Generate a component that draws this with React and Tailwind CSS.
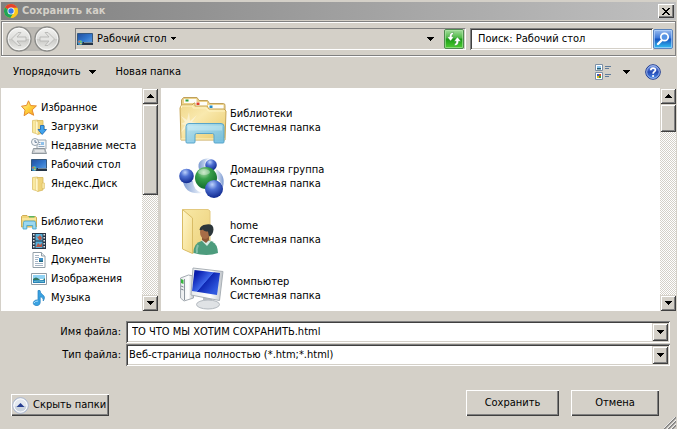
import clsx from 'clsx';

const raised =
    'bg-[#d4d0c8] shadow-[inset_1px_1px_#fff,inset_-1px_-1px_#404040,inset_-2px_-2px_#808080]';
const raisedSoft =
    'bg-[#d4d0c8] shadow-[inset_1px_1px_#d4d0c8,inset_-1px_-1px_#404040,inset_2px_2px_#fff,inset_-2px_-2px_#808080]';
const sunken =
    'shadow-[inset_1px_1px_#808080,inset_-1px_-1px_#fff,inset_2px_2px_#404040,inset_-2px_-2px_#d4d0c8]';

const favorites = [
    { name: 'Загрузки', icon: <DownloadsIcon /> },
    { name: 'Недавние места', icon: <RecentIcon /> },
    { name: 'Рабочий стол', icon: <DesktopIcon /> },
    { name: 'Яндекс.Диск', icon: <SmallFolderIcon /> },
];

const libraries = [
    { name: 'Видео', icon: <VideoIcon /> },
    { name: 'Документы', icon: <DocumentIcon /> },
    { name: 'Изображения', icon: <PictureIcon /> },
    { name: 'Музыка', icon: <MusicIcon /> },
];

const places = [
    { name: 'Библиотеки', icon: <LibrariesLargeIcon /> },
    { name: 'Домашняя группа', icon: <HomegroupIcon /> },
    { name: 'home', icon: <UserFolderIcon /> },
    { name: 'Компьютер', icon: <ComputerIcon /> },
];

export default function App() {
    return (
        <div className="flex h-screen min-h-80 flex-col overflow-hidden bg-[#d4d0c8] px-px pt-0.5 font-['DejaVu_Sans_Condensed','DejaVu_Sans',sans-serif] text-[11px] leading-[14px] text-black">
            <TitleBar />
            <AddressRow />
            <Toolbar />
            <div className="flex min-h-0 flex-1 gap-[3px]">
                <Sidebar />
                <FileList />
            </div>
            <SaveForm />
        </div>
    );
}

function TitleBar() {
    return (
        <header className="flex h-[18px] shrink-0 items-center bg-linear-to-r from-[#808080] to-[#c0c0c0] pr-0.5 pl-[3px]">
            <ChromeIcon />
            <h1 className="ml-1 flex-1 font-bold text-[#d4d0c8]">Сохранить как</h1>
            <button aria-label="Закрыть" className={clsx('grid h-3.5 w-4 place-items-center', raised)}>
                <svg width="8" height="7" viewBox="0 0 8 7" shapeRendering="crispEdges">
                    <path d="M0 0h2v1h1v1h2v-1h1v-1h2v1h-1v1h-1v1h-1v1h1v1h1v1h1v1h-2v-1h-1v-1h-2v1h-1v1h-2v-1h1v-1h1v-1h1v-1h-1v-1h-1v-1h-1z" />
                </svg>
            </button>
        </header>
    );
}

function AddressRow() {
    return (
        <div className="mt-px flex h-[35px] shrink-0 items-center border border-[#808080] pr-0.5 pl-1 shadow-[inset_1px_1px_#fff,0_1px_#fff]">
            <NavButtons />
            <div className="ml-[15px] flex h-[22px] min-w-0 flex-1 items-center border border-t-[#808080] border-r-white border-b-white border-l-[#808080] pr-px pl-px">
                <button className="flex items-center gap-1">
                    <DesktopIcon />
                    Рабочий стол
                    <Caret />
                </button>
                <button aria-label="Предыдущие расположения" className="ml-auto p-2">
                    <Caret wide />
                </button>
                <button aria-label="Обновить" className="ml-0.5">
                    <RefreshIcon />
                </button>
            </div>
            <input
                aria-label="Поиск"
                defaultValue="Поиск: Рабочий стол"
                className={clsx('ml-1 h-[22px] w-[183px] bg-white px-2 outline-none', sunken)}
            />
            <button aria-label="Найти">
                <SearchIcon />
            </button>
        </div>
    );
}

function NavButtons() {
    return (
        <div className="relative flex">
            <svg width="54" height="26" viewBox="0 0 54 26" className="absolute inset-0">
                <defs>
                    <linearGradient id="nav" x2="0" y2="1">
                        <stop stopColor="#f4f4f2" />
                        <stop offset=".48" stopColor="#dededc" />
                        <stop offset=".5" stopColor="#c8c8c5" />
                        <stop offset="1" stopColor="#efefec" />
                    </linearGradient>
                </defs>
                <path d="M13 1h28v24H13q7-3 14-3t14 3V1q-7 3-14 3T13 1" fill="#bbb9b4" />
                <rect x="13" y="3" width="28" height="20" fill="#bdbab4" />
                {[13, 41].map((cx) => (
                    <g key={cx}>
                        <circle cx={cx} cy="13" r="12" fill="url(#nav)" stroke="#8b8b88" strokeWidth="1.4" />
                        <circle cx={cx} cy="13" r="10.8" fill="none" stroke="#fff" strokeOpacity=".7" />
                    </g>
                ))}
                <g fill="#e5e5e3" stroke="#b1b1ae" strokeWidth=".8">
                    <path d="M5.500 13l6.500-6.500h3L11 11h9v4h-9l4 4.500h-3z" />
                    <path d="M48.500 13L42 6.500h-3l4 4.500h-9v4h9l-4 4.500h3z" />
                </g>
            </svg>
            <button aria-label="Назад" className="relative size-[26px] rounded-full" />
            <button aria-label="Вперёд" className="relative ml-0.5 size-[26px] rounded-full" />
        </div>
    );
}

function Toolbar() {
    return (
        <div className="flex h-8 shrink-0 items-center pr-[15px] pl-3">
            <button className="flex items-center gap-2">
                Упорядочить
                <Caret wide />
            </button>
            <button className="ml-5">Новая папка</button>
            <button aria-label="Вид" className="ml-auto flex items-center gap-3">
                <ViewIcon />
                <Caret wide />
            </button>
            <button aria-label="Справка" className="ml-[15px]">
                <HelpIcon />
            </button>
        </div>
    );
}

function Sidebar() {
    return (
        <nav className="flex w-[157px] shrink-0 bg-white">
            <div className="min-w-0 flex-1 overflow-hidden pt-2.5 pl-5">
                <TreeGroup title="Избранное" icon={<StarIcon />} items={favorites} />
                <TreeGroup title="Библиотеки" icon={<LibrarySmallIcon />} items={libraries} />
            </div>
            <ScrollBar thumb="h-[91px]" />
        </nav>
    );
}

function TreeGroup({ title, icon, items }) {
    return (
        <section className="mb-[19px] whitespace-nowrap">
            <h2 className="flex h-[19px] items-center gap-1">
                {icon}
                {title}
            </h2>
            <ul className="pl-2.5">
                {items.map((item) => (
                    <li key={item.name}>
                        <a href="#" className="flex h-[19px] items-center gap-1">
                            {item.icon}
                            {item.name}
                        </a>
                    </li>
                ))}
            </ul>
        </section>
    );
}

function FileList() {
    return (
        <main className="flex min-w-0 flex-1 bg-white">
            <ul className="min-w-0 flex-1 overflow-hidden pt-1 pl-[18px]">
                {places.map((place) => (
                    <li key={place.name} className="flex h-14 items-center gap-[3px]">
                        {place.icon}
                        <div className="pt-0.5">
                            <p>{place.name}</p>
                            <p>Системная папка</p>
                        </div>
                    </li>
                ))}
            </ul>
            <ScrollBar thumb="h-7" />
        </main>
    );
}

function ScrollBar({ thumb }) {
    return (
        <div className="flex w-4 shrink-0 flex-col bg-[repeating-conic-gradient(#fff_0_25%,#d4d0c8_0_50%)] bg-size-[2px_2px]">
            <button aria-label="Прокрутить вверх" className={clsx('grid h-4 place-items-center', raisedSoft)}>
                <Caret wide className="rotate-180" />
            </button>
            <div className={clsx(thumb, raisedSoft)} />
            <button aria-label="Прокрутить вниз" className={clsx('mt-auto grid h-4 place-items-center', raisedSoft)}>
                <Caret wide />
            </button>
        </div>
    );
}

function SaveForm() {
    return (
        <form className="relative shrink-0 pt-2.5 pr-1.5 pb-[13px]" onSubmit={(e) => e.preventDefault()}>
            <div className="grid grid-cols-[120px_1fr] items-center gap-x-[5px] gap-y-px">
                <label htmlFor="name" className="text-right">Имя файла:</label>
                <div className={clsx('flex h-[22px] bg-white p-0.5', sunken)}>
                    <input
                        id="name"
                        defaultValue="ТО ЧТО МЫ ХОТИМ СОХРАНИТЬ.html"
                        className="min-w-0 flex-1 px-1 outline-none"
                    />
                    <button type="button" aria-label="Показать имена" className={clsx('grid w-4 place-items-center', raisedSoft)}>
                        <Caret wide />
                    </button>
                </div>
                <label htmlFor="type" className="text-right">Тип файла:</label>
                <div className={clsx('relative flex h-[22px] bg-white p-0.5', sunken)}>
                    <select id="type" className="min-w-0 flex-1 appearance-none px-px outline-none">
                        <option>Веб-страница полностью (*.htm;*.html)</option>
                    </select>
                    <span className={clsx('pointer-events-none absolute inset-y-0.5 right-0.5 grid w-4 place-items-center', raisedSoft)}>
                        <Caret wide />
                    </span>
                </div>
            </div>
            <div className="mt-6 flex items-end pr-[11px] pl-2.5">
                <button type="button" className={clsx('flex h-[22px] items-center gap-1 pr-[3px] pl-px', raised)}>
                    <HideIcon />
                    Скрыть папки
                </button>
                <button type="submit" className={clsx('ml-auto h-[26px] w-[93px]', raised)}>Сохранить</button>
                <button type="button" className={clsx('ml-3 h-[26px] w-[88px]', raised)}>Отмена</button>
            </div>
            <svg className="absolute right-0 bottom-0" width="12" height="12" viewBox="0 0 12 12">
                <path d="M0 12L12 0M4 12l8-8M8 12l4-4" stroke="#808080" strokeWidth="1.700" />
                <path d="M-1 12L11 0M3 12l9-9M7 12l5-5" stroke="#fff" strokeWidth=".8" />
            </svg>
        </form>
    );
}

function Caret({ wide, className }) {
    return wide ? (
        <svg width="7" height="4" viewBox="0 0 7 4" className={className} shapeRendering="crispEdges">
            <path d="M0 0h7v1h-1v1h-1v1h-1v1h-1v-1h-1v-1h-1v-1h-1z" />
        </svg>
    ) : (
        <svg width="5" height="3" viewBox="0 0 5 3" className={className} shapeRendering="crispEdges">
            <path d="M0 0h5v1h-1v1h-1v1h-1v-1h-1v-1h-1z" />
        </svg>
    );
}

function ChromeIcon() {
    return (
        <svg width="14" height="14" viewBox="0 0 14 14">
            <circle cx="7" cy="7" r="7" fill="#fbc81c" />
            <path d="M7 7L1 3.400A7 7 0 0 1 13.200 3.800z" fill="#e5412e" />
            <path d="M1 3.400A7 7 0 0 0 6.500 14L9.500 9z" fill="#20a457" />
            <path d="M7 3.800h6.200A7 7 0 0 1 6.500 14L10 8.500z" fill="#fbc81c" />
            <circle cx="7" cy="7" r="3.500" fill="#fff" />
            <circle cx="7" cy="7" r="2.700" fill="#3978e5" />
        </svg>
    );
}

function RefreshIcon() {
    return (
        <svg width="20" height="20" viewBox="0 0 20 20">
            <defs>
                <linearGradient id="refresh" x2="0" y2="1">
                    <stop stopColor="#a9dda3" />
                    <stop offset=".45" stopColor="#4cba43" />
                    <stop offset=".5" stopColor="#189b15" />
                    <stop offset="1" stopColor="#51cf35" />
                </linearGradient>
            </defs>
            <rect x=".5" y=".5" width="19" height="19" rx="1.500" fill="url(#refresh)" stroke="#4f8a50" />
            <path d="M1.500 1.500h17v17h-17z" fill="none" stroke="#b0e8a8" strokeOpacity=".6" />
            <g fill="#fff" stroke="#247d25" strokeWidth=".4">
                <path d="M9.500 3.300C6.500 3.500 5.300 5 5.300 7.800H3l3.600 4.300L10 7.800H7.900c0-1.500.3-2.300 1.600-2.800z" />
                <path d="M10.500 16.700c3-.2 4.200-1.700 4.200-4.500H17l-3.600-4.300L10 12.200h2.100c0 1.500-.3 2.300-1.600 2.800z" />
            </g>
        </svg>
    );
}

function SearchIcon() {
    return (
        <svg width="20" height="20" viewBox="0 0 20 20">
            <defs>
                <linearGradient id="search" x2="0" y2="1">
                    <stop stopColor="#9ebff0" />
                    <stop offset=".45" stopColor="#3d78d8" />
                    <stop offset=".5" stopColor="#1553bf" />
                    <stop offset="1" stopColor="#35c5f5" />
                </linearGradient>
            </defs>
            <rect x=".5" y=".5" width="19" height="19" rx="1.500" fill="url(#search)" stroke="#5b84bd" />
            <path d="M1.500 1.500h17v17h-17z" fill="none" stroke="#c0dcff" strokeOpacity=".6" />
            <path d="M9 11l-4 4" stroke="#fff" strokeWidth="2.400" strokeLinecap="round" />
            <circle cx="11.500" cy="8" r="3.700" fill="#5794e4" stroke="#fff" strokeWidth="1.700" />
        </svg>
    );
}

function ViewIcon() {
    return (
        <svg width="16" height="16" viewBox="0 0 16 16">
            <path d="M.5.5h7v6h-7zM.5 8.500h7v7h-7z" fill="#fff" stroke="#7c8fa5" />
            <path d="M2 2h4v2H2z" fill="#8cc5ef" />
            <path d="M2 4h4v1.500H2z" fill="#205c72" />
            <path d="M2 10h2v2H2z" fill="#3562bf" />
            <path d="M4 10h2v2H4z" fill="#d64927" />
            <path d="M2 12h2v2H2z" fill="#e2b920" />
            <path d="M4 12h2v2H4z" fill="#399b36" />
            <path d="M10 2.500h6M10 4.500h4M10 10.500h6M10 12.500h4" stroke="#607c9b" />
        </svg>
    );
}

function HelpIcon() {
    return (
        <svg width="16" height="16" viewBox="0 0 16 16">
            <defs>
                <linearGradient id="help" x2="0" y2="1">
                    <stop stopColor="#7b9de8" />
                    <stop offset=".5" stopColor="#2449b4" />
                    <stop offset="1" stopColor="#4a8dec" />
                </linearGradient>
            </defs>
            <circle cx="8" cy="8" r="7.300" fill="url(#help)" stroke="#203d91" />
            <circle cx="8" cy="8" r="6.300" fill="none" stroke="#b8ccf5" strokeWidth=".8" />
            <path d="M5.800 6.200C5.800 3.300 10.400 3.400 10.400 6c0 1.600-2.300 1.800-2.300 3.700" fill="none" stroke="#fff" strokeWidth="1.700" />
            <circle cx="8.100" cy="12" r="1.100" fill="#fff" />
        </svg>
    );
}

function HideIcon() {
    return (
        <svg width="17" height="17" viewBox="0 0 17 17">
            <circle cx="8.500" cy="8.500" r="7.800" fill="#e4e9f0" stroke="#a7b4cf" />
            <path d="M2 9a6.500 6.500 0 0 0 13 0z" fill="#cbd4df" />
            <circle cx="8.500" cy="8.500" r="6.600" fill="none" stroke="#fff" />
            <path d="M8.500 6l4 4h-8z" fill="#263e91" />
        </svg>
    );
}

function StarIcon() {
    return (
        <svg width="16" height="16" viewBox="0 0 16 16">
            <defs>
                <linearGradient id="star" x2="1" y2="1">
                    <stop stopColor="#fff5a5" />
                    <stop offset=".5" stopColor="#ffd23d" />
                    <stop offset="1" stopColor="#f49b20" />
                </linearGradient>
            </defs>
            <path d="M7.500.8l2.200 4.800 5.700.3-4.200 4 1.500 5.400-4.900-2.600-4.700 3 .9-5.600L.5 6.200 5.600 5.400z" fill="url(#star)" stroke="#e58a2c" strokeLinejoin="round" />
        </svg>
    );
}

function FolderShape() {
    return (
        <>
            <path d="M1.500 1.500l5-.5v14l-5-1.500z" fill="#f9e99e" stroke="#dcc06a" strokeWidth=".8" />
            <path d="M6.500 1.500H12v12.500l-5.500 1.500z" fill="#efd47a" stroke="#d6b659" strokeWidth=".8" />
            <path d="M4.500 1.500l2.500 1.500v12.500l-2.500-1.500z" fill="#fff6c8" stroke="#e5cc80" strokeWidth=".6" />
            <path d="M11 7h2.500v5.500H11z" fill="#f7e6a4" stroke="#d6b659" strokeWidth=".5" />
        </>
    );
}

function SmallFolderIcon() {
    return (
        <svg width="16" height="16" viewBox="0 0 16 16">
            <FolderShape />
        </svg>
    );
}

function DownloadsIcon() {
    return (
        <svg width="16" height="16" viewBox="0 0 16 16">
            <FolderShape />
            <path d="M9.500 6.500h3.500v4h2.500l-4.300 5-4.200-5h2.500z" fill="#41a4ee" stroke="#1665b7" strokeWidth=".8" />
        </svg>
    );
}

function RecentIcon() {
    return (
        <svg width="16" height="16" viewBox="0 0 16 16">
            <path d="M6 2h9v9H6z" fill="#f3f6f8" stroke="#9aa5ad" />
            <path d="M10 4h3v3h-3z" fill="#8dc0ea" />
            <path d="M7.500 4.500h2M7.500 6.500h2M7.500 8.500h6" stroke="#7290af" strokeWidth=".8" />
            <path d="M2.500 10.500h11l2 5H1z" fill="#c9cdd0" stroke="#7c868e" strokeWidth=".8" />
            <path d="M4 13h9" stroke="#fff" />
            <circle cx="4" cy="4" r="3.500" fill="#f5f7fa" stroke="#8997a5" strokeWidth=".9" />
            <path d="M4 2v2.300h2" fill="none" stroke="#59708a" strokeWidth=".9" />
        </svg>
    );
}

function DesktopIcon() {
    return (
        <svg width="16" height="16" viewBox="0 0 16 16">
            <defs>
                <linearGradient id="desk" x2="1" y2="1">
                    <stop stopColor="#224e9b" />
                    <stop offset=".5" stopColor="#3175cb" />
                    <stop offset="1" stopColor="#65a6e8" />
                </linearGradient>
            </defs>
            <path d="M.5 2.500h15v11H.5z" fill="url(#desk)" stroke="#36597e" />
            <path d="M0 11h16v3H0z" fill="#253446" />
            <path d="M7 11h9v1H7z" fill="#71899e" />
            <circle cx="3" cy="11.500" r="2.500" fill="#399bd8" />
            <path d="M1.500 10l1.400-.5v2H1.200z" fill="#ef6c35" />
            <path d="M3.200 9.500l1.500.5v1.500H3.200z" fill="#8cc94c" />
            <path d="M3.200 12h1.500l-.3 1.400-1.200-.3z" fill="#f6d24a" />
        </svg>
    );
}

function LibrarySmallIcon() {
    return (
        <svg width="16" height="16" viewBox="0 0 16 16">
            <path d="M.5 13V2.500l1-1H6l1 1h7.500l1 1V13z" fill="#f2d67a" stroke="#cba64b" strokeWidth=".9" />
            <path d="M8 2h5.500v1.500H8z" fill="#5ab45f" />
            <path d="M1 5h14" stroke="#fff3b6" />
            <path d="M2.500 8.500q0-1.500 1.500-1.500h9q1.500 0 1.500 1.500l.7 6.500h-3.500v-3.500H5.800V15H2z" fill="#9bd8f1" stroke="#3e9fc9" strokeWidth=".8" />
        </svg>
    );
}

function VideoIcon() {
    return (
        <svg width="16" height="16" viewBox="0 0 16 16">
            <path d="M1 0h14v16H1z" fill="#273445" />
            <path d="M4.500 1h7v6.500h-7zM4.500 8.500h7V15h-7z" fill="#57b2dd" />
            <path d="M5 3l2 1 2-2 2 3-1 2H8L7 5zM5 14l2-4 2 2 2-2v4z" fill="#ba5847" />
            <path d="M2.800 1v15M13.200 1v15" stroke="#e6edf1" strokeWidth="1.500" strokeDasharray="1.500 1.500" />
        </svg>
    );
}

function DocumentIcon() {
    return (
        <svg width="16" height="16" viewBox="0 0 16 16">
            <path d="M2 .5h8.500L14 4v11.500H2z" fill="#fff" stroke="#929fa8" />
            <path d="M10.500.5V4H14" fill="#e3e9ed" stroke="#929fa8" />
            <path d="M4 3.500h4M4 5.500h4M4 7.500h3M4 9.500h3M4 11.500h8M4 13.500h8" stroke="#8fa2b6" strokeWidth=".8" />
            <path d="M8 6h4v4H8z" fill="#3c91cb" />
            <path d="M8 8.500h4V10H8z" fill="#206781" />
        </svg>
    );
}

function PictureIcon() {
    return (
        <svg width="16" height="16" viewBox="0 0 16 16">
            <path d="M.5 2.500h15v11H.5z" fill="#fff" stroke="#929ca4" />
            <path d="M2 4h12v4H2z" fill="#91d3f4" />
            <path d="M2 8q3-3 6 0t6-1v2.500H2z" fill="#327762" />
            <path d="M2 9h12v3H2z" fill="#2b83b7" />
            <path d="M3 10.500q4-1 10 0" fill="none" stroke="#72c5d8" />
        </svg>
    );
}

function MusicIcon() {
    return (
        <svg width="16" height="16" viewBox="0 0 16 16">
            <path d="M7 .5h2q0 2.500 2.700 4.300c2.500 1.800 2 4 .5 6.200.3-2.700-.8-3.600-3-4.200v5.700C9 15 7 16 4.500 15.500 1 14.500 2 10.500 5.500 10L7 10z" fill="#3aa2e2" stroke="#227dbc" strokeWidth=".7" />
            <path d="M3 13q1-2 4-2" fill="none" stroke="#a5ddff" />
        </svg>
    );
}

function LibrariesLargeIcon() {
    return (
        <svg width="48" height="48" viewBox="0 0 48 48">
            <defs>
                <linearGradient id="libYellow" x2="1" y2="1">
                    <stop stopColor="#f0d78a" />
                    <stop offset=".4" stopColor="#f9e9ae" />
                    <stop offset="1" stopColor="#e9c969" />
                </linearGradient>
                <linearGradient id="libBlue" x2="1" y2="1">
                    <stop stopColor="#b5e2f3" />
                    <stop offset="1" stopColor="#69bbe0" />
                </linearGradient>
            </defs>
            <path d="M2.500 14V4l2-2.500H18l2 3h8.500l2 3h14q1.500 0 1.500 2v5z" fill="#ecd189" stroke="#bfa05a" />
            <path d="M5 3h12.500v4H5zM15 6h13v4H15zM29 9h15.500v4H29z" fill="#fdfdf8" />
            <path d="M6.500 3.500h3v2h-3z" fill="#2d9d3b" />
            <path d="M17.500 6.500h3v2.500h-3z" fill="#e33c27" />
            <path d="M30.500 9.500h3v2.500h-3z" fill="#268ec8" />
            <path d="M1 12l1.500-3H13l2-2h1v3h12l2 3h15l2 2-1 29H2z" fill="url(#libYellow)" stroke="#c8a553" />
            <path d="M2.500 12V10H14v2h13l2.500 3H46M2 43h44" fill="none" stroke="#fff4c4" />
            <path d="M10 16l1 9 7-6-5 7 10 2-10 1 4 7-6-5-1 8-2-8-6 5 4-7-4-1 4-2-4-6 6 4z" fill="#fff" fillOpacity=".45" />
            <path d="M7 30.500q0-3 3-3h32q3 0 3 3V46q0 1-1 1H36q-1 0-1-1v-7q0-1.500-1.500-1.500h-16Q16 37.500 16 39v7q0 1-1 1H8q-1 0-1-1z" fill="url(#libBlue)" fillOpacity=".92" stroke="#58a5ca" />
            <path d="M9 29.500h34v5H9z" fill="#e0f8ff" fillOpacity=".35" />
        </svg>
    );
}

function HomegroupIcon() {
    return (
        <svg width="48" height="48" viewBox="0 0 48 48">
            <defs>
                <radialGradient id="ballBlue" cx=".4" cy=".25" r=".75">
                    <stop stopColor="#bdd3fc" />
                    <stop offset=".4" stopColor="#4e70d2" />
                    <stop offset="1" stopColor="#112b91" />
                </radialGradient>
                <radialGradient id="ballGreen" cx=".4" cy=".25" r=".75">
                    <stop stopColor="#b5e0b0" />
                    <stop offset=".4" stopColor="#38a04b" />
                    <stop offset="1" stopColor="#116b2c" />
                </radialGradient>
                <linearGradient id="swoosh" x2="1">
                    <stop stopColor="#7d9bd2" />
                    <stop offset="1" stopColor="#f3f8fd" />
                </linearGradient>
                <linearGradient id="swooshBack" x1="1" x2="0">
                    <stop stopColor="#7d9bd2" />
                    <stop offset="1" stopColor="#f3f8fd" />
                </linearGradient>
            </defs>
            <path d="M20 17Q17 7 31 6q-7 3-5 10z" fill="url(#swoosh)" />
            <path d="M4 29q2 14 19 12-9-3-9-12z" fill="url(#swoosh)" />
            <path d="M37 17q10 6 7 18-3-7-8-10z" fill="url(#swooshBack)" />
            <circle cx="32" cy="13" r="5.800" fill="url(#ballBlue)" />
            <circle cx="7.500" cy="24" r="7.300" fill="url(#ballBlue)" />
            <circle cx="27" cy="26" r="11" fill="url(#ballGreen)" />
            <circle cx="35" cy="37" r="9" fill="url(#ballBlue)" />
            <ellipse cx="25" cy="20" rx="6" ry="3" fill="#fff" fillOpacity=".35" />
        </svg>
    );
}

function UserFolderIcon() {
    return (
        <svg width="48" height="48" viewBox="0 0 48 48">
            <defs>
                <linearGradient id="userFolder" x2="1" y2="1">
                    <stop stopColor="#f8e8a5" />
                    <stop offset="1" stopColor="#ecd07a" />
                </linearGradient>
                <linearGradient id="userFlap" x2="1" y2="1">
                    <stop stopColor="#fff6c9" />
                    <stop offset="1" stopColor="#f3db8b" />
                </linearGradient>
            </defs>
            <path d="M4 1.500h25l2 1.500v36l-17 6z" fill="url(#userFolder)" stroke="#e3c97f" />
            <path d="M3.500 1.500L13.500 10v35.500l-10-4.500z" fill="url(#userFlap)" stroke="#d9bc65" />
            <path d="M14.500 45q0-10 8-12l6-1q9 2 10 9l.5 4q-11 4-24.500 0z" fill="#4d9c7d" />
            <path d="M22 32l6 6 4-5z" fill="#d9ede4" />
            <path d="M23 26h7v6l-3 3-4-3z" fill="#8c5736" />
            <ellipse cx="26" cy="24" rx="5" ry="7" fill="#a76d47" />
            <path d="M20.500 22q.5-5 7-5.500 7-1 7 5-.5 6-4.500 7l-1-5q-4 0-5-2-2 1-3.500.5z" fill="#2c363a" />
            <path d="M19 37q-2 4-1 8" stroke="#83bfaa" strokeWidth="2" fill="none" />
        </svg>
    );
}

function ComputerIcon() {
    return (
        <svg width="48" height="48" viewBox="0 0 48 48">
            <defs>
                <linearGradient id="screen" x2=".9" y2=".7">
                    <stop stopColor="#0b1c9c" />
                    <stop offset=".2" stopColor="#0a1fb0" />
                    <stop offset=".58" stopColor="#3f68ea" />
                    <stop offset=".6" stopColor="#0f28b4" />
                    <stop offset="1" stopColor="#2f58df" />
                </linearGradient>
                <linearGradient id="metal" x2="1">
                    <stop stopColor="#e6e9eb" />
                    <stop offset=".6" stopColor="#fff" />
                    <stop offset="1" stopColor="#bfc4c9" />
                </linearGradient>
            </defs>
            <path d="M1.500 14l8-3 5 1v22L5 37l-3.500-3z" fill="url(#metal)" stroke="#a4abb2" />
            <path d="M5.500 15v21" stroke="#8b949c" />
            <path d="M2 15l2.500 1v4L2 19z" fill="#36b43c" />
            <path d="M2 22l2.500 1M2 25l2.500 1" stroke="#7b858e" />
            <path d="M24 33h9l1 7H24z" fill="#b7bdc4" />
            <ellipse cx="29" cy="40.500" rx="11.500" ry="4.500" fill="#dfe2e5" stroke="#b3b9bf" />
            <path d="M14 4l30 3.500-3.500 29-28.500-5.500z" fill="url(#metal)" stroke="#a9b0b6" />
            <path d="M15.500 6L41 9l-3 22-25-4z" fill="url(#screen)" />
        </svg>
    );
}
